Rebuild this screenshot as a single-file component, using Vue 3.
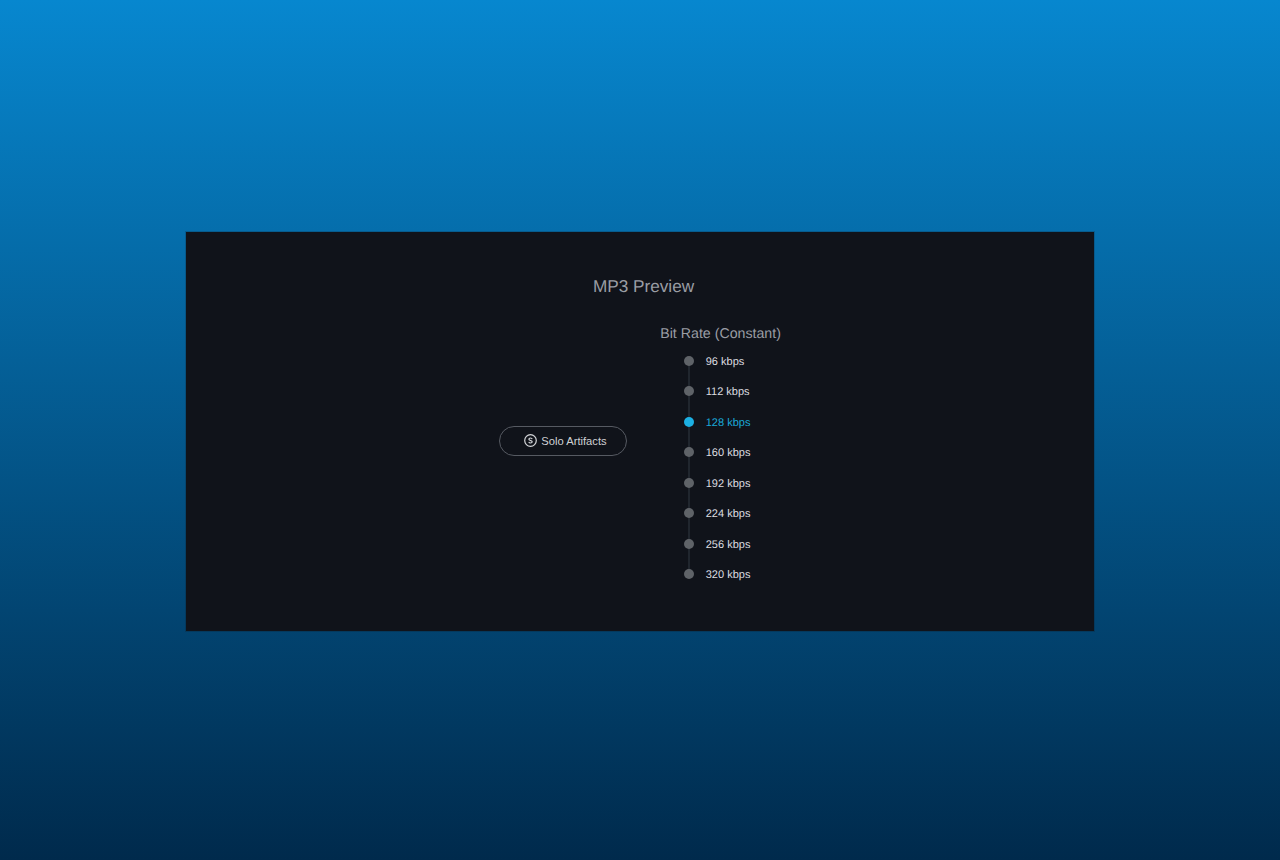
<script setup>
const rates = [96, 112, 128, 160, 192, 224, 256, 320]
const selected = 128
</script>

<template>
  <div class="page">
    <div class="panel">
      <h1 class="title">MP3 Preview</h1>
      <div class="content">
        <button class="solo">
          <svg class="solo-icon" width="13" height="13" viewBox="0 0 13 13">
            <circle cx="6.5" cy="6.5" r="5.8" fill="none" stroke="#d5d7da" stroke-width="1.2" />
            <path d="M8.2 5.1C8 4.4 7.3 4 6.5 4C5.6 4 4.9 4.4 4.9 5.2C4.9 6 5.6 6.2 6.5 6.5C7.4 6.8 8.2 7 8.2 7.8C8.2 8.6 7.4 9 6.5 9C5.7 9 5 8.6 4.8 7.9" fill="none" stroke="#d5d7da" stroke-width="1.2" />
          </svg>
          <span>Solo Artifacts</span>
        </button>
        <div class="rates">
          <div class="rates-label">Bit Rate (Constant)</div>
          <ul class="rate-list">
            <li v-for="r in rates" :key="r" class="rate" :class="{ active: r === selected }">
              <span class="dot"></span>
              <span class="rate-text">{{ r }} kbps</span>
            </li>
          </ul>
        </div>
      </div>
    </div>
  </div>
</template>

<style>
body {
  margin: 0;
}
</style>

<style scoped>
.page {
  height: 860px;
  box-sizing: border-box;
  padding-top: 232px;
  background: linear-gradient(180deg, #0787cf 0%, #002a4c 100%);
  font-family: "Liberation Sans", Arial, sans-serif;
  text-rendering: geometricPrecision;
}

.panel {
  width: 908px;
  height: 399px;
  box-sizing: border-box;
  margin: 0 auto;
  padding-top: 44px;
  background: #10131a;
  box-shadow: 0 0 0 1px rgba(16, 19, 26, 0.2);
  display: flex;
  flex-direction: column;
  align-items: center;
}

.title {
  margin: 0 0 0 7px;
  font-size: 17.2px;
  line-height: 20px;
  font-weight: 400;
  color: #9a9da4;
}

.content {
  margin-top: 29px;
  display: flex;
  align-items: center;
  gap: 33px;
}

.solo {
  width: 128.5px;
  height: 30px;
  box-sizing: border-box;
  margin-bottom: 23px;
  padding: 0 0 0 5px;
  display: flex;
  align-items: center;
  justify-content: center;
  gap: 4px;
  background: transparent;
  border: 1px solid #565a62;
  border-radius: 15px;
  color: #cfd1d4;
  font-family: inherit;
  font-size: 11.2px;
}

.rates {
  width: 121px;
}

.rates-label {
  font-size: 14.2px;
  line-height: 18px;
  color: #9a9da4;
  white-space: nowrap;
}

.rate-list {
  list-style: none;
  margin: 12px 0 0;
  padding: 0;
  display: flex;
  flex-direction: column;
  gap: 18.43px;
}

.rate {
  position: relative;
  height: 12px;
  padding-left: 24px;
  display: flex;
  align-items: center;
  gap: 11.5px;
  font-size: 11px;
  color: #dcdde0;
}

.rate-text {
  margin-top: 2px;
}

.rate:not(:last-child)::after {
  content: "";
  position: absolute;
  left: 28px;
  top: 6px;
  width: 2px;
  height: 30px;
  background: #20262e;
}

.dot {
  position: relative;
  z-index: 1;
  width: 10px;
  height: 10px;
  border-radius: 50%;
  background: #5f6368;
}

.rate.active {
  color: #1aa8d8;
}

.rate.active .dot {
  background: #1cb0e3;
}
</style>
